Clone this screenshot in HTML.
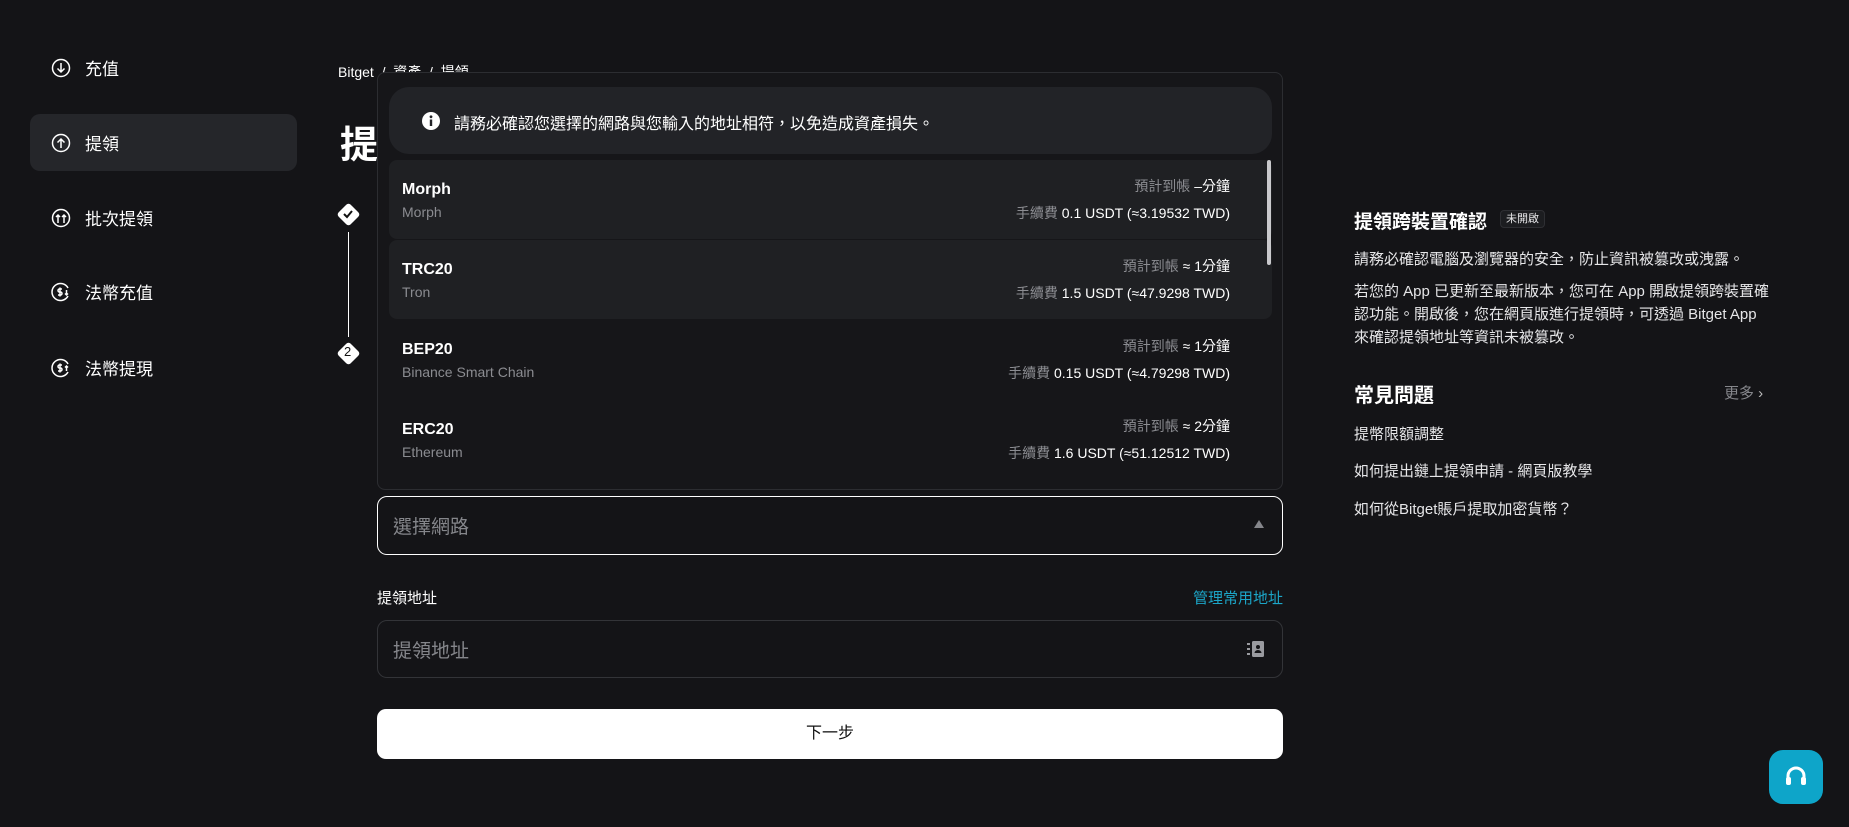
<!DOCTYPE html>
<html><head><meta charset="utf-8"><style>
*{box-sizing:border-box;margin:0;padding:0}
body{width:1849px;height:827px;background:#141417;color:#fff;font-family:"Liberation Sans","Noto Sans CJK TC",sans-serif;position:relative;overflow:hidden}
.a{position:absolute;white-space:nowrap}
.nav{position:absolute;left:30px;width:267px;height:57px;display:flex;align-items:center;font-size:17px;border-radius:10px}
.nav svg{margin-left:21px;margin-right:14px}
.sel{background:#25262a}
.row{position:absolute;left:389px;width:883px;height:79px;border-radius:8px}
.row .n{position:absolute;left:13px;top:21px;font-size:16px;font-weight:bold}
.row .s{position:absolute;left:13px;top:44px;font-size:14px;color:#8b8c91}
.row .t{position:absolute;right:42px;top:16px;font-size:14px;color:#fff}
.row .f{position:absolute;right:42px;top:43px;font-size:14px;color:#fff}
.g{color:#8b8c91}
.dia{position:absolute;width:17px;height:17px;background:#fff;transform:rotate(45deg);border-radius:3px}
.rp{font-size:15px;color:#e6e6e8}
</style></head><body>
<div class="nav" style="top:39px"><svg width="20" height="20" viewBox="0 0 20 20" fill="none" stroke="#fff" stroke-width="1.5"><circle cx="10" cy="10" r="8.5"/><path d="M10 5v9M6.5 10.5 10 14l3.5-3.5"/></svg>充值</div>
<div class="nav sel" style="top:114px"><svg width="20" height="20" viewBox="0 0 20 20" fill="none" stroke="#fff" stroke-width="1.5"><circle cx="10" cy="10" r="8.5"/><path d="M10 15V6M6.5 9.5 10 6l3.5 3.5"/></svg>提領</div>
<div class="nav" style="top:189px"><svg width="20" height="20" viewBox="0 0 20 20" fill="none" stroke="#fff" stroke-width="1.5"><circle cx="10" cy="10" r="8.5"/><path d="M7 15V7M5 9l2-2 2 2M13 15V7M11 9l2-2 2 2"/></svg>批次提領</div>
<div class="nav" style="top:263px"><svg width="20" height="20" viewBox="0 0 20 20" fill="none" stroke="#fff" stroke-width="1.5"><path d="M17 6A8.5 8.5 0 1 0 17 14"/><path d="M11 7H8.5a1.5 1.5 0 0 0 0 3h1a1.5 1.5 0 0 1 0 3H7M9 5.5v9M15.5 8v5M14 11.5l1.5 1.5 1.5-1.5"/></svg>法幣充值</div>
<div class="nav" style="top:339px"><svg width="20" height="20" viewBox="0 0 20 20" fill="none" stroke="#fff" stroke-width="1.5"><path d="M17 6A8.5 8.5 0 1 0 17 14"/><path d="M11 7H8.5a1.5 1.5 0 0 0 0 3h1a1.5 1.5 0 0 1 0 3H7M9 5.5v9M15.5 13V8M14 9.5 15.5 8 17 9.5"/></svg>法幣提現</div>

<div class="a" style="left:338px;top:62px;font-size:14px">Bitget &nbsp;/&nbsp; 資產 &nbsp;/&nbsp; 提領</div>
<div class="a" style="left:340px;top:114px;font-size:38px;font-weight:bold">提</div>
<div class="dia" style="left:340px;top:206px"></div>
<svg class="a" style="left:341px;top:207px" width="14" height="14" viewBox="0 0 14 14"><path d="M3 7l3 3 5-6" stroke="#111" stroke-width="2" fill="none"/></svg>
<div class="a" style="left:348px;top:232px;width:1px;height:105px;background:#fff"></div>
<div class="dia" style="left:340px;top:345px"></div>
<div class="a" style="left:344px;top:344px;font-size:13px;color:#111">2</div>

<div class="a" style="left:377px;top:72px;width:906px;height:418px;border:1px solid #2c2d31;border-radius:8px;background:#161619"></div>
<div class="a" style="left:389px;top:87px;width:883px;height:67px;background:#222327;border-radius:20px"></div>
<svg class="a" style="left:422px;top:112px" width="18" height="18" viewBox="0 0 18 18"><circle cx="9" cy="9" r="9" fill="#fff"/><rect x="7.8" y="7.5" width="2.4" height="6.5" fill="#222327"/><circle cx="9" cy="4.8" r="1.4" fill="#222327"/></svg>
<div class="a" style="left:454px;top:110px;font-size:16px">請務必確認您選擇的網路與您輸入的地址相符，以免造成資產損失。</div>

<div class="row" style="top:160px;background:#1f2023"><div class="n">Morph</div><div class="s">Morph</div><div class="t"><span class="g">預計到帳</span> –分鐘</div><div class="f"><span class="g">手續費</span> 0.1 USDT (≈3.19532 TWD)</div></div>
<div class="row" style="top:240px;background:#1f2023"><div class="n">TRC20</div><div class="s">Tron</div><div class="t"><span class="g">預計到帳</span> ≈ 1分鐘</div><div class="f"><span class="g">手續費</span> 1.5 USDT (≈47.9298 TWD)</div></div>
<div class="row" style="top:320px"><div class="n">BEP20</div><div class="s">Binance Smart Chain</div><div class="t"><span class="g">預計到帳</span> ≈ 1分鐘</div><div class="f"><span class="g">手續費</span> 0.15 USDT (≈4.79298 TWD)</div></div>
<div class="row" style="top:400px"><div class="n">ERC20</div><div class="s">Ethereum</div><div class="t"><span class="g">預計到帳</span> ≈ 2分鐘</div><div class="f"><span class="g">手續費</span> 1.6 USDT (≈51.12512 TWD)</div></div>
<div class="a" style="left:1267px;top:160px;width:4px;height:105px;background:#c9c9cc;border-radius:2px"></div>

<div class="a" style="left:377px;top:496px;width:906px;height:59px;border:1px solid #fff;border-radius:10px"></div>
<div class="a" style="left:393px;top:512px;font-size:19px;color:#85868b">選擇網路</div>
<svg class="a" style="left:1253px;top:519px" width="12" height="10"><path d="M6 1 11 9H1z" fill="#85868b"/></svg>
<div class="a" style="left:377px;top:587px;font-size:15px">提領地址</div>
<div class="a" style="left:1193px;top:587px;font-size:15px;color:#1ca6c8">管理常用地址</div>
<div class="a" style="left:377px;top:620px;width:906px;height:58px;border:1px solid #333438;border-radius:10px"></div>
<div class="a" style="left:393px;top:636px;font-size:19px;color:#85868b">提領地址</div>
<svg class="a" style="left:1246px;top:640px" width="19" height="18" viewBox="0 0 19 18"><rect x="6" y="1" width="12" height="16" rx="1.5" fill="#9a9ba0"/><rect x="1" y="3" width="3" height="2" fill="#9a9ba0"/><rect x="1" y="8" width="3" height="2" fill="#9a9ba0"/><rect x="1" y="13" width="3" height="2" fill="#9a9ba0"/><circle cx="12" cy="7" r="2" fill="#141417"/><path d="M8.5 13a3.5 3 0 0 1 7 0z" fill="#141417"/></svg>
<div class="a" style="left:377px;top:709px;width:906px;height:50px;background:#fff;border-radius:9px;color:#111;font-size:16px;text-align:center;line-height:50px">下一步</div>

<div class="a" style="left:1354px;top:207px;font-size:19px;font-weight:bold">提領跨裝置確認</div>
<div class="a" style="left:1500px;top:210px;height:18px;padding:0 5px;border:1px solid #2e2f33;background:#1c1d20;border-radius:4px;font-size:11px;line-height:16px;color:#e6e6e8">未開啟</div>
<div class="a rp" style="left:1354px;top:248px">請務必確認電腦及瀏覽器的安全，防止資訊被篡改或洩露。</div>
<div class="a rp" style="left:1354px;top:280px;line-height:23px;white-space:normal;width:420px">若您的 App 已更新至最新版本，您可在 App 開啟提領跨裝置確認功能。開啟後，您在網頁版進行提領時，可透過 Bitget App 來確認提領地址等資訊未被篡改。</div>
<div class="a" style="left:1354px;top:379px;font-size:20px;font-weight:bold">常見問題</div>
<div class="a" style="left:1724px;top:382px;font-size:15px;color:#85868b">更多 <span style="color:#bbb">›</span></div>
<div class="a rp" style="left:1354px;top:423px">提幣限額調整</div>
<div class="a rp" style="left:1354px;top:460px">如何提出鏈上提領申請 - 網頁版教學</div>
<div class="a rp" style="left:1354px;top:498px">如何從Bitget賬戶提取加密貨幣？</div>

<div class="a" style="left:1769px;top:750px;width:54px;height:54px;background:#0ea5c9;border-radius:14px"></div>
<svg class="a" style="left:1781px;top:762px" width="30" height="30" viewBox="0 0 30 30" fill="none"><path d="M7 17v-3a8 8 0 0 1 16 0v3" stroke="#fff" stroke-width="3"/><rect x="5" y="15" width="5" height="8" rx="2" fill="#fff"/><rect x="20" y="15" width="5" height="8" rx="2" fill="#fff"/></svg>
</body></html>
